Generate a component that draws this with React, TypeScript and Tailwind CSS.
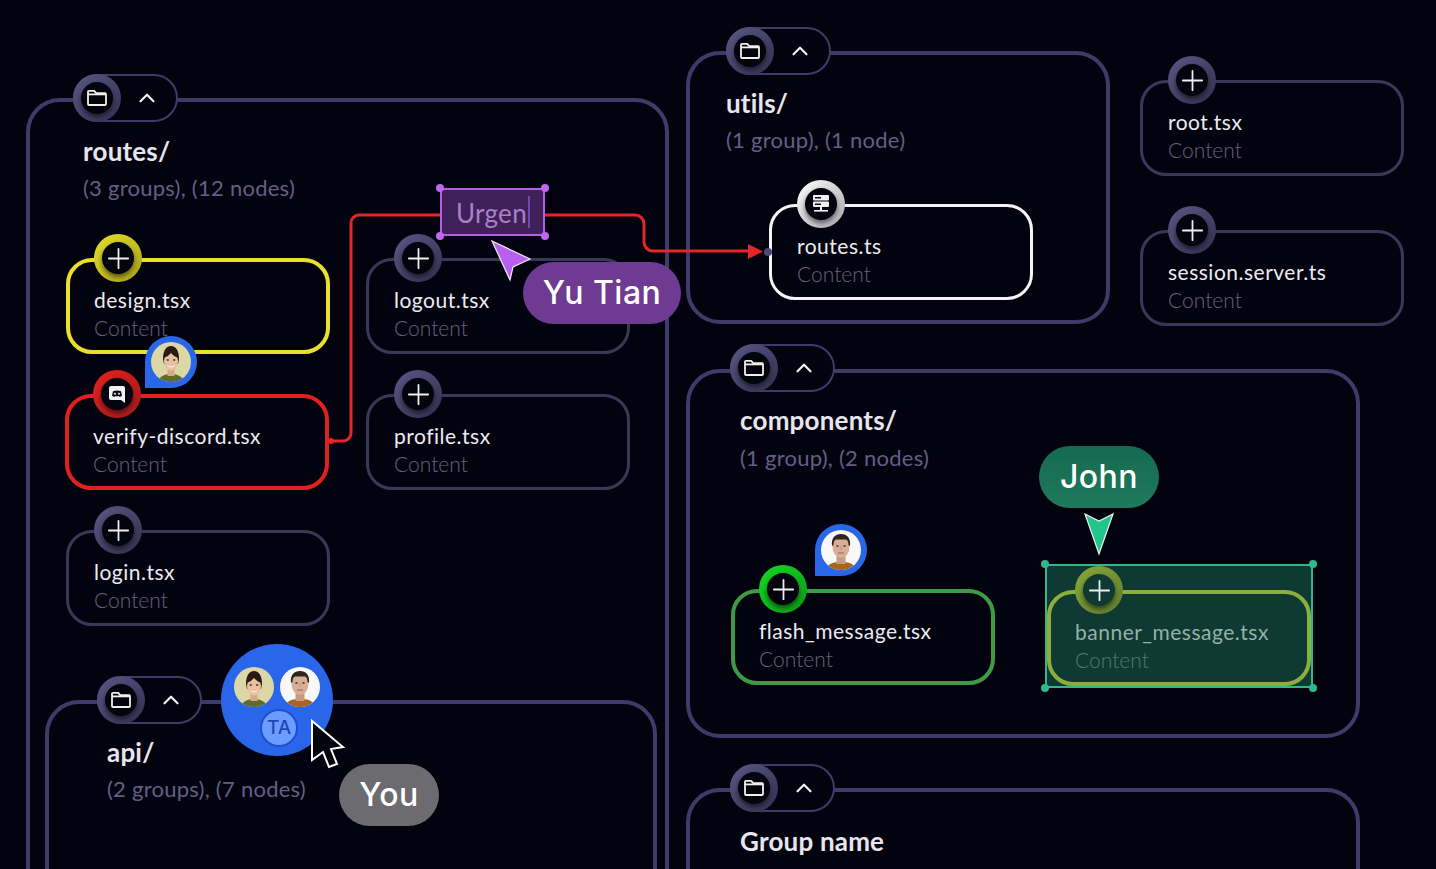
import React from 'react';
import { ChevronUp, Plus } from 'lucide-react';

type Tone = 'plain' | 'yellow' | 'red' | 'white' | 'green' | 'olive';

const thick = 'border-4 pt-[24px] pl-[24px]';
const thin = 'border-[3px] pt-[25px] pl-[25px]';

const tones: Record<Tone, { box: string; badge: string; ring: string; core: string; name: string; sub: string }> = {
  plain: { box: `${thin} border-[#3a3858]`, badge: 'top-[-27px] left-[25px]', ring: 'bg-linear-to-br from-[#5a5886] to-[#323150]', core: 'bg-[#04040f]', name: 'text-[#ecebf2]', sub: 'text-[#64627c]' },
  yellow: { box: `${thick} border-[#e8e02c]`, badge: 'top-[-28px] left-[24px]', ring: 'bg-linear-to-br from-[#e6e02a] to-[#a8a31c]', core: 'bg-[#04040f]', name: 'text-[#ecebf2]', sub: 'text-[#64627c]' },
  red: { box: `${thick} border-[#e0211f]`, badge: 'top-[-28px] left-[24px]', ring: 'bg-linear-to-br from-[#e5211f] to-[#a31a1a]', core: 'bg-[#04040f]', name: 'text-[#ecebf2]', sub: 'text-[#64627c]' },
  white: { box: `${thin} border-[#f4f4f6]`, badge: 'top-[-27px] left-[25px]', ring: 'bg-linear-to-br from-[#ffffff] to-[#a9a9ae]', core: 'bg-[#04040f]', name: 'text-[#ecebf2]', sub: 'text-[#64627c]' },
  green: { box: `${thick} border-[#3f9a47]`, badge: 'top-[-28px] left-[24px]', ring: 'bg-linear-to-br from-[#12dc20] to-[#0c9a18]', core: 'bg-[#04040f]', name: 'text-[#ecebf2]', sub: 'text-[#64627c]' },
  olive: { box: `${thick} border-[#8bae3e]`, badge: 'top-[-28px] left-[24px]', ring: 'bg-linear-to-br from-[#8aa83a] to-[#5f7c30]', core: 'bg-[#0f3a33]', name: 'text-[#93b3a4]', sub: 'text-[#4d7a6b]' },
};

const FolderIcon = () => (
  <svg width="22" height="20" viewBox="0 0 22 20" fill="none" stroke="#f2f0e8" strokeWidth="1.800">
    <path d="M2 3.800a1 1 0 0 1 1-1h5.200l2 2.400H19a1 1 0 0 1 1 1V16a1 1 0 0 1-1 1H3a1 1 0 0 1-1-1z" strokeLinejoin="round" />
    <path d="M2 6.400h18" />
  </svg>
);

const DiscordIcon = () => (
  <svg width="18" height="19" viewBox="0 0 18 19">
    <path d="M3 1h12a2 2 0 0 1 2 2v15l-4-3H3a2 2 0 0 1-2-2V3a2 2 0 0 1 2-2z" fill="#f2f2f4" />
    <path d="M5 6.2c2.4-1 5.600-1 8 0l1 4.600c-.8.700-1.700 1-2.500 1.100l-.6-1c-1.200.3-2.600.3-3.800 0l-.6 1c-.8-.1-1.700-.4-2.500-1.100z" fill="#0a0a14" />
    <circle cx="7" cy="8.800" r="1" fill="#f2f2f4" />
    <circle cx="11" cy="8.800" r="1" fill="#f2f2f4" />
  </svg>
);

const ServerIcon = () => (
  <svg width="18" height="20" viewBox="0 0 18 20">
    <rect x="1" y="1" width="16" height="5.500" rx="1" fill="#f2f2f4" />
    <rect x="1" y="7.500" width="16" height="5.500" rx="1" fill="#f2f2f4" />
    <rect x="3" y="3" width="6" height="1.500" fill="#0a0a14" />
    <rect x="3" y="9.500" width="6" height="1.500" fill="#0a0a14" />
    <rect x="8" y="13" width="2" height="3" fill="#f2f2f4" />
    <rect x="2" y="16" width="14" height="1.600" fill="#f2f2f4" />
  </svg>
);

const WomanFace = () => (
  <svg viewBox="0 0 40 40" className="h-full w-full">
    <rect width="40" height="40" fill="#dcd8a6" />
    <path d="M6 42c1-7 7-10 14-10s13 3 14 10z" fill="#5d6b35" />
    <rect x="16.500" y="25" width="7" height="9" fill="#d9a887" />
    <path d="M12 17c0-9 3.500-13 8-13s8 4 8 13l-1 5H13z" fill="#2a1a14" />
    <ellipse cx="20" cy="19" rx="7" ry="9.500" fill="#eac0a2" />
    <path d="M12.500 16c1.500-5 4.500-7 7.500-7s6 2 7.500 7c-3.500-1-5.500-3-7.500-5-2 2-4 4-7.500 5z" fill="#2a1a14" />
    <path d="M16 23c2.500 1.800 5.500 1.800 8 0-1 3.200-7 3.200-8 0z" fill="#f6f2ee" />
    <ellipse cx="16.800" cy="18" rx="1.300" ry=".8" fill="#2a1a14" />
    <ellipse cx="23.200" cy="18" rx="1.300" ry=".8" fill="#2a1a14" />
  </svg>
);

const ManFace = () => (
  <svg viewBox="0 0 40 40" className="h-full w-full">
    <rect width="40" height="40" fill="#f8f8f8" />
    <path d="M4 42c1-8 8-10 16-10s15 2 16 10z" fill="#a8651f" />
    <rect x="15.500" y="25" width="9" height="9" fill="#c99a80" />
    <ellipse cx="20" cy="17" rx="8.500" ry="11" fill="#d8ae96" />
    <path d="M11 16c-1-8 3-12 9-12s10 4 9 12l-1.500-1c0-3-1-5-2.500-5.500h-10c-1.500.5-2.500 2.500-2.500 5.500z" fill="#2e251c" />
    <ellipse cx="16.500" cy="16" rx="1.300" ry=".8" fill="#2e251c" />
    <ellipse cx="23.500" cy="16" rx="1.300" ry=".8" fill="#2e251c" />
    <path d="M17 23h6" stroke="#96685a" strokeWidth="1" />
    <path d="M20 16v4" stroke="#bb8f78" strokeWidth="1" />
  </svg>
);

const Badge = ({ tone, icon }: { tone: Tone; icon: React.ReactNode }) => (
  <div className={`absolute flex h-12 w-12 items-center justify-center rounded-full ${tones[tone].badge} ${tones[tone].ring}`}>
    <div className={`flex h-[32px] w-[32px] items-center justify-center rounded-full shadow-[0_3px_5px_rgba(0,0,0,0.55)] ${tones[tone].core}`}>
      {icon}
    </div>
  </div>
);

const plus = <Plus size={33} strokeWidth={1.3} className="shrink-0 text-[#eeeef2]" />;

const Node = ({ name, tone = 'plain', icon = plus, className }: { name: string; tone?: Tone; icon?: React.ReactNode; className: string }) => (
  <div className={`absolute h-[96px] w-[264px] rounded-[26px] ${tones[tone].box} ${className}`}>
    <Badge tone={tone} icon={icon} />
    <div className={`text-[21px] leading-[28px] tracking-[0.5px] ${tones[tone].name}`}>{name}</div>
    <div className={`text-[21px] leading-[28px] font-light ${tones[tone].sub}`}>Content</div>
  </div>
);

const Group = ({ title, info, className, pill, body, gap = 'mt-[7px]' }: { title: string; info?: string; className: string; pill: string; body: string; gap?: string }) => (
  <div className={`absolute rounded-[34px] border-4 border-[#3d3b69] ${className}`}>
    <div className={`absolute flex h-12 w-[105px] items-center rounded-full border-2 border-[#3d3b69] bg-[#03030f] ${pill}`}>
      <div className="-ml-[2px] flex h-12 w-12 shrink-0 items-center justify-center rounded-full bg-linear-to-br from-[#5a5886] to-[#323150]">
        <div className="flex h-[32px] w-[32px] items-center justify-center rounded-full bg-[#04040f] shadow-[0_3px_5px_rgba(0,0,0,0.55)]">
          <FolderIcon />
        </div>
      </div>
      <ChevronUp size={26} strokeWidth={2} className="ml-[13px] text-[#f2f2f4]" />
    </div>
    <div className={body}>
      <div className="text-[26px] leading-[32px] font-bold tracking-[0.2px] text-[#e7e6ee]">{title}</div>
      {info && <div className={`${gap} text-[22px] leading-[28px] tracking-[0.25px] text-[#625f85]`}>{info}</div>}
    </div>
  </div>
);

const Pin = ({ className, face }: { className: string; face: React.ReactNode }) => (
  <div className={`absolute flex h-[52px] w-[52px] items-center justify-center rounded-full rounded-bl-none bg-[#2a66ea] ${className}`}>
    <div className="h-10 w-10 overflow-hidden rounded-full">{face}</div>
  </div>
);

const Handle = ({ className }: { className: string }) => (
  <span className={`absolute h-2 w-2 rounded-full ${className}`} />
);

const Label = ({ text, className }: { text: string; className: string }) => (
  <div className={`absolute flex h-[62px] items-center justify-center rounded-full font-['Inter',sans-serif] text-[32px] font-medium tracking-[0.5px] text-white ${className}`}>
    {text}
  </div>
);

export default function App() {
  return (
    <div className="relative h-[869px] w-[1436px] overflow-hidden bg-[#03030f] font-['Lato','Noto_Sans',sans-serif]">
      {/* groups */}
      <Group title="routes/" info="(3 groups), (12 nodes)" className="top-[98px] left-[26px] h-[820px] w-[643px]" pill="top-[-28px] left-[43px]" body="pt-[33px] pl-[53px]" />
      <Group title="api/" info="(2 groups), (7 nodes)" className="top-[700px] left-[45px] h-[300px] w-[612px]" pill="top-[-28px] left-[48px]" body="pt-[32px] pl-[58px]" />
      <Group title="utils/" info="(1 group), (1 node)" className="top-[51px] left-[686px] h-[273px] w-[424px]" pill="top-[-28px] left-[36px]" body="pt-[32px] pl-[36px]" />
      <Group title="components/" info="(1 group), (2 nodes)" className="top-[369px] left-[686px] h-[369px] w-[674px]" pill="top-[-29px] left-[40px]" body="pt-[31px] pl-[50px]" gap="mt-[8px]" />
      <Group title="Group name" className="top-[788px] left-[686px] h-[300px] w-[674px]" pill="top-[-28px] left-[40px]" body="pt-[33px] pl-[50px]" />

      {/* banner selection */}
      <div className="absolute top-[564px] left-[1045px] h-[124px] w-[268px] border-2 border-[#2fb98a] bg-[#0f3a33]">
        <Handle className="top-[-6px] left-[-6px] bg-[#2fb98a]" />
        <Handle className="top-[-6px] right-[-6px] bg-[#2fb98a]" />
        <Handle className="bottom-[-6px] left-[-6px] bg-[#2fb98a]" />
        <Handle className="right-[-6px] bottom-[-6px] bg-[#2fb98a]" />
      </div>

      {/* nodes */}
      <Node name="design.tsx" tone="yellow" className="top-[258px] left-[66px]" />
      <Node name="verify-discord.tsx" tone="red" icon={<DiscordIcon />} className="top-[394px] left-[65px]" />
      <Node name="login.tsx" className="top-[530px] left-[66px]" />
      <Node name="logout.tsx" className="top-[258px] left-[366px]" />
      <Node name="profile.tsx" className="top-[394px] left-[366px]" />
      <Node name="routes.ts" tone="white" icon={<ServerIcon />} className="top-[204px] left-[769px]" />
      <Node name="root.tsx" className="top-[80px] left-[1140px]" />
      <Node name="session.server.ts" className="top-[230px] left-[1140px]" />
      <Node name="flash_message.tsx" tone="green" className="top-[589px] left-[731px]" />
      <Node name="banner_message.tsx" tone="olive" className="top-[590px] left-[1047px]" />

      {/* connector */}
      <svg className="absolute top-0 left-0 h-[869px] w-[1436px]" viewBox="0 0 1436 869" fill="none">
        <path d="M330 441h13a8 8 0 0 0 8-8V223a8 8 0 0 1 8-8h276a9 9 0 0 1 9 9v18a9 9 0 0 0 9 9h100" stroke="#e3262a" strokeWidth="3" />
        <path d="M748 244l15 7.500-15 7.500z" fill="#e3262a" />
        <circle cx="768" cy="252" r="4" fill="#4b4977" />
        <circle cx="331" cy="441" r="3" fill="#e3262a" />
      </svg>

      <Pin className="top-[336px] left-[145px]" face={<WomanFace />} />
      <Pin className="top-[524px] left-[815px]" face={<ManFace />} />

      {/* text box being edited */}
      <div className="absolute top-[188px] left-[440px] flex h-12 w-[105px] items-center border-2 border-[#b35ee6] bg-[#3f2058] pl-[14px]">
        <span className="pt-[2px] text-[26px] tracking-[0.3px] text-[#a981c9]">Urgen</span>
        <span className="ml-[1px] h-[32px] w-[2px] bg-[#6a4bb0]" />
        <Handle className="top-[-6px] left-[-6px] bg-[#c066f0]" />
        <Handle className="top-[-6px] right-[-6px] bg-[#c066f0]" />
        <Handle className="bottom-[-6px] left-[-6px] bg-[#c066f0]" />
        <Handle className="right-[-6px] bottom-[-6px] bg-[#c066f0]" />
      </div>

      {/* cursors */}
      <svg className="absolute top-0 left-0 h-[869px] w-[1436px]" viewBox="0 0 1436 869">
        <path d="M492 241l38 18-17 8-3 13z" fill="#b95ff0" stroke="#f2e8f8" strokeWidth="1.200" />
        <path d="M1085 514l14 7 14-7-14 40z" fill="#22c58a" stroke="#f0f4f2" strokeWidth="1.200" />
      </svg>

      <Label text="Yu Tian" className="top-[262px] left-[523px] w-[158px] bg-[#6f3a91]" />
      <Label text="John" className="top-[446px] left-[1039px] w-[120px] bg-linear-to-b from-[#156a50] to-[#1f7a5c]" />
      <Label text="You" className="top-[764px] left-[339px] w-[100px] bg-[#6b6b70]" />

      {/* collaborators bubble */}
      <div className="absolute top-[644px] left-[221px] flex h-[112px] w-[112px] flex-col items-center rounded-full bg-[#2a66ea] pt-[23px]">
        <div className="flex gap-[6px]">
          <div className="h-10 w-10 overflow-hidden rounded-full"><WomanFace /></div>
          <div className="h-10 w-10 overflow-hidden rounded-full"><ManFace /></div>
        </div>
        <div className="mt-[2px] ml-[4px] flex h-[38px] w-[38px] items-center justify-center rounded-full border-2 border-[#1d4fd0] bg-[#6b9cff] font-['Inter',sans-serif] text-[19px] font-medium text-[#1f47b8]">
          TA
        </div>
      </div>
      <svg className="absolute top-0 left-0 h-[869px] w-[1436px]" viewBox="0 0 1436 869">
        <path d="M312 721v39l11-8 6 15 8-3-6-15 12-2z" fill="#04040f" stroke="#ffffff" strokeWidth="2" strokeLinejoin="miter" />
      </svg>
    </div>
  );
}
